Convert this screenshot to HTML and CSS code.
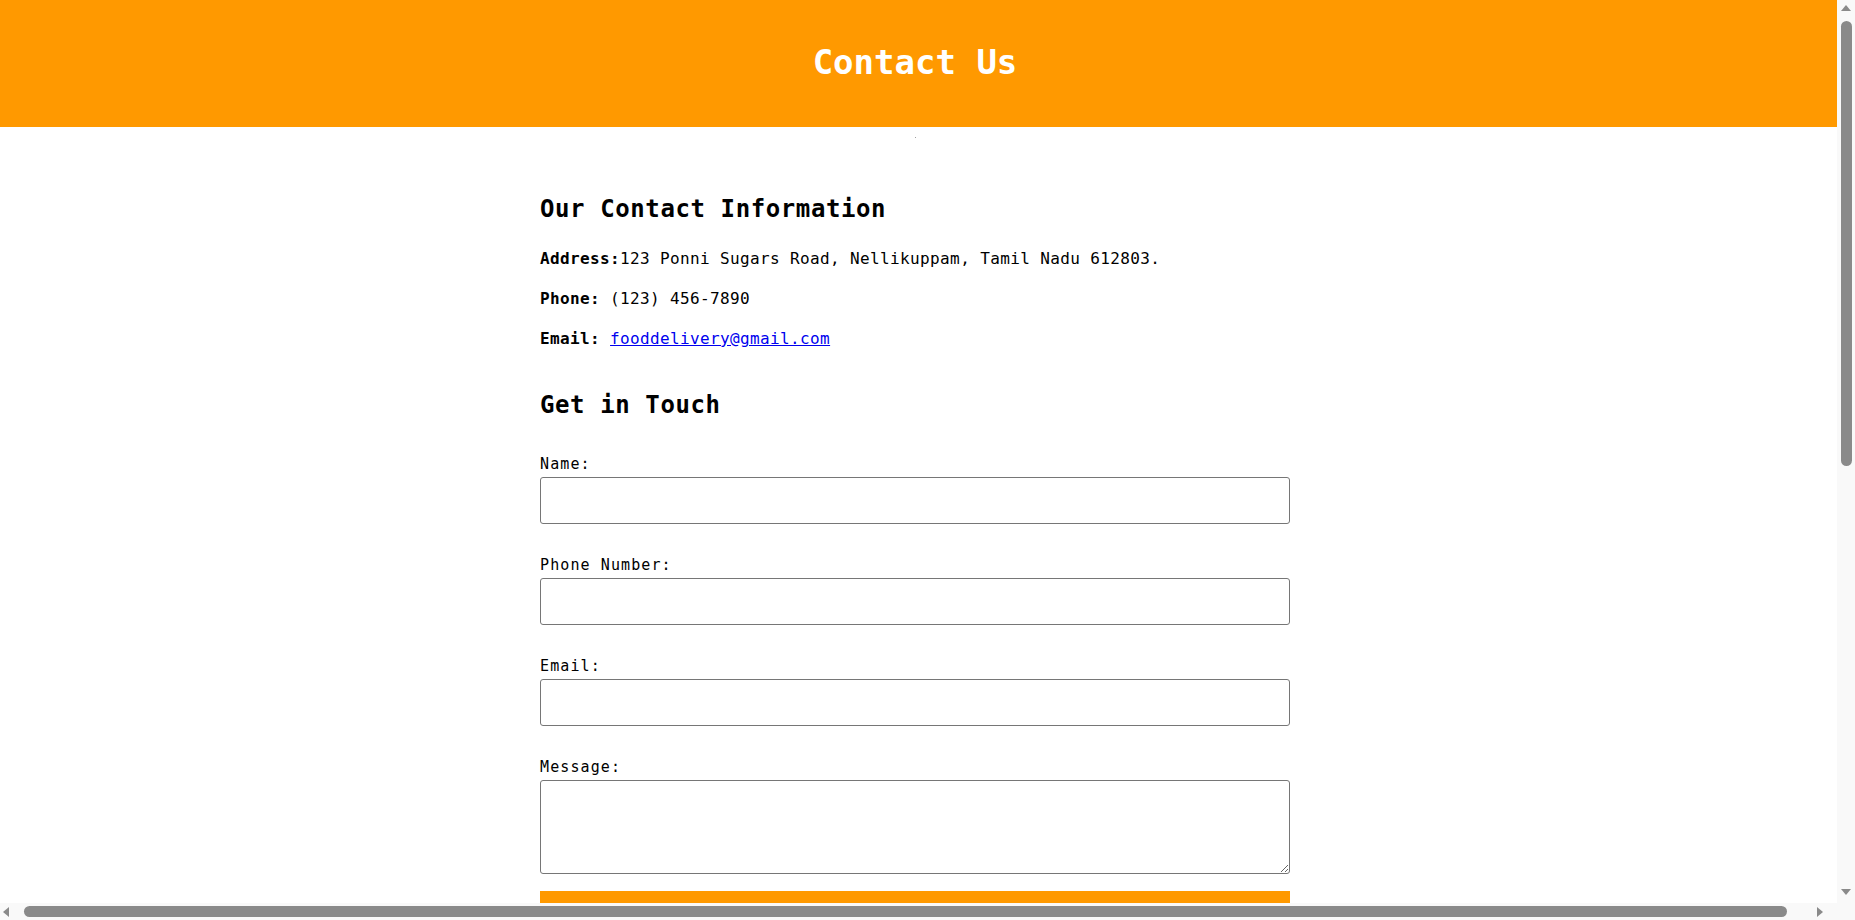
FILE: index.html
```html
<!DOCTYPE html>
<html lang="en">
<head>
<meta charset="utf-8">
<title>Contact Us</title>
<link rel="stylesheet" href="styles.css">
</head>
<body>
<div class="site">
  <header class="site-header">
    <h1 class="site-title">Contact Us</h1>
  </header>
  <div class="divider-dot"></div>
  <main class="contact">
    <section class="contact-info">
      <h2 class="section-title">Our Contact Information</h2>
      <p class="info-line"><strong>Address:</strong>123 Ponni Sugars Road, Nellikuppam, Tamil Nadu 612803.</p>
      <p class="info-line"><strong>Phone:</strong> (123) 456-7890</p>
      <p class="info-line"><strong>Email:</strong> <a class="info-link" href="mailto:fooddelivery@gmail.com">fooddelivery@gmail.com</a></p>
    </section>
    <section class="contact-form-section">
      <h2 class="section-title form-title">Get in Touch</h2>
      <form class="contact-form">
        <div class="field">
          <label class="field-label" for="name">Name:</label>
          <input class="field-input" id="name" type="text">
        </div>
        <div class="field">
          <label class="field-label" for="phone">Phone Number:</label>
          <input class="field-input" id="phone" type="tel">
        </div>
        <div class="field">
          <label class="field-label" for="email">Email:</label>
          <input class="field-input" id="email" type="email">
        </div>
        <div class="field field-message">
          <label class="field-label" for="message">Message:</label>
          <textarea class="field-input field-textarea" id="message"></textarea>
        </div>
        <button class="submit-btn" type="submit">Send Message</button>
      </form>
    </section>
  </main>
</div>

<div class="scrollbar scrollbar-v" aria-hidden="true">
  <span class="sb-arrow sb-up"></span>
  <span class="sb-thumb sb-thumb-v"></span>
  <span class="sb-arrow sb-down"></span>
</div>
<div class="scrollbar scrollbar-h" aria-hidden="true">
  <span class="sb-arrow sb-left"></span>
  <span class="sb-thumb sb-thumb-h"></span>
  <span class="sb-arrow sb-right"></span>
</div>
<div class="scrollbar-corner" aria-hidden="true"></div>
</body>
</html>
```
FILE: styles.css
```css
* {
  box-sizing: border-box;
}

body {
  margin: 0;
  font-family: "DejaVu Sans Mono", monospace;
  color: #000;
  background: #fff;
}

.site {
  width: 1830px;
  min-height: 1760px;
}

.site-header {
  box-sizing: content-box;
  width: 100%;
  padding: 42px 35px 45px 0;
  background: #ff9900;
}

.site-title {
  margin: 0;
  font-size: 34px;
  line-height: 40px;
  font-weight: bold;
  color: #fff;
  text-align: center;
}

.divider-dot {
  width: 1px;
  height: 1px;
  margin: 10px auto 0;
  background: #a0a0a0;
}

.contact {
  width: 750px;
  margin: 0 auto;
  padding-top: 53px;
  display: flex;
  flex-direction: column;
}

.section-title {
  margin: 0 0 20px;
  font-size: 24px;
  line-height: 36px;
  letter-spacing: 0.6px;
  font-weight: bold;
}

.info-line {
  margin: 0 0 16px;
  font-size: 16px;
  line-height: 24px;
  letter-spacing: 0.37px;
}

.info-link {
  color: #0000ee;
  text-decoration: underline;
}

.contact-form-section {
  margin-top: 20px;
}

.form-title {
  margin-bottom: 32px;
}

.contact-form {
  display: flex;
  flex-direction: column;
}

.field {
  display: flex;
  flex-direction: column;
  gap: 4px;
  margin-bottom: 32px;
}

.field-message {
  margin-bottom: 17px;
}

.field-label {
  font-size: 15px;
  line-height: 18px;
  letter-spacing: 1.1px;
}

.field-input {
  width: 100%;
  height: 47px;
  padding: 0 10px;
  border: 1px solid #767676;
  border-radius: 3px;
  font-family: inherit;
  font-size: 16px;
  background: #fff;
}

.field-textarea {
  height: 94px;
  padding: 10px;
  resize: vertical;
}

.submit-btn {
  width: 100%;
  padding: 10px 14px 14px;
  border: 0;
  background: #ff9900;
  color: #fff;
  font-family: inherit;
  font-size: 16px;
  line-height: 18px;
  cursor: pointer;
}

/* classic browser scrollbars, drawn over the page edge */
.scrollbar {
  position: fixed;
  display: flex;
  align-items: center;
  background: #f9f9f9;
  z-index: 10;
}

.scrollbar-v {
  top: 0;
  right: 0;
  bottom: 17px;
  width: 18px;
  flex-direction: column;
  padding: 5px 0 0;
}

.scrollbar-h {
  left: 0;
  right: 18px;
  bottom: 0;
  height: 17px;
  padding: 0 0 0 3px;
}

.scrollbar-corner {
  position: fixed;
  right: 0;
  bottom: 0;
  width: 18px;
  height: 17px;
  background: #f9f9f9;
  z-index: 10;
}

.sb-thumb {
  background: #8a8a8a;
  border-radius: 6px;
}

.sb-thumb-v {
  width: 11px;
  height: 445px;
  margin-top: 10px;
}

.sb-thumb-h {
  width: 1763px;
  height: 11px;
  margin-left: 15px;
}

.sb-arrow {
  width: 0;
  height: 0;
  border-style: solid;
  border-color: transparent;
}

.sb-up {
  border-width: 0 5px 6px;
  border-bottom-color: #8a8a8a;
}

.sb-down {
  margin-top: auto;
  margin-bottom: 8px;
  border-width: 6px 5px 0;
  border-top-color: #8a8a8a;
}

.sb-left {
  border-width: 5px 6px 5px 0;
  border-right-color: #8a8a8a;
}

.sb-right {
  margin-left: 30px;
  border-width: 5px 0 5px 6px;
  border-left-color: #8a8a8a;
}
```
